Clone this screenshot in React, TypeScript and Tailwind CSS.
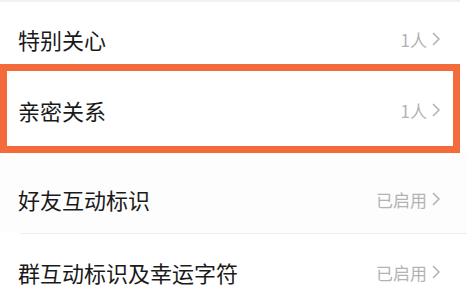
const font = { fontFamily: '"Noto Sans CJK SC", "Noto Sans", sans-serif' };

function Chevron() {
  return (
    <svg width="9" height="14" viewBox="0 0 9 14" fill="none" className="shrink-0">
      <path d="M1.5 1.5 L7 7 L1.5 12.5" stroke="#b5b5b5" strokeWidth="1.7" strokeLinecap="round" strokeLinejoin="round" />
    </svg>
  );
}

function Value({ text }: { text: string }) {
  return (
    <div className="flex items-center gap-[5px]">
      <span className="text-[17px] text-[#b3b3b3] leading-none">{text}</span>
      <Chevron />
    </div>
  );
}

export default function App() {
  return (
    <div className="w-[467px] h-[293px] overflow-hidden bg-white" style={font}>
      <div className="h-[2px] w-[460px] bg-[#f1f3f3]" />

      <div className="h-[62px] flex items-center justify-between pt-[12px] pl-[18px] pr-[26px]">
        <span className="text-[22px] text-[#1a1a1a] leading-none">特别关心</span>
        <Value text="1人" />
      </div>

      <div className="w-[460px] h-[89px] border-[7px] border-[#f36b3b] flex items-center justify-between pt-[3px] pl-[11px] pr-[12px]">
        <span className="text-[22px] text-[#1a1a1a] leading-none">亲密关系</span>
        <Value text="1人" />
      </div>

      <div className="h-[80px] flex items-center justify-between pt-[12px] pl-[18px] pr-[26px] bg-[#fdfdfd]">
        <span className="text-[22px] text-[#1a1a1a] leading-none">好友互动标识</span>
        <Value text="已启用" />
      </div>

      <div className="h-px ml-[20px] bg-[#efefef]" />

      <div className="h-[76px] flex items-center justify-between pl-[18px] pr-[26px]">
        <span className="text-[22px] text-[#1a1a1a] leading-none">群互动标识及幸运字符</span>
        <Value text="已启用" />
      </div>
    </div>
  );
}
